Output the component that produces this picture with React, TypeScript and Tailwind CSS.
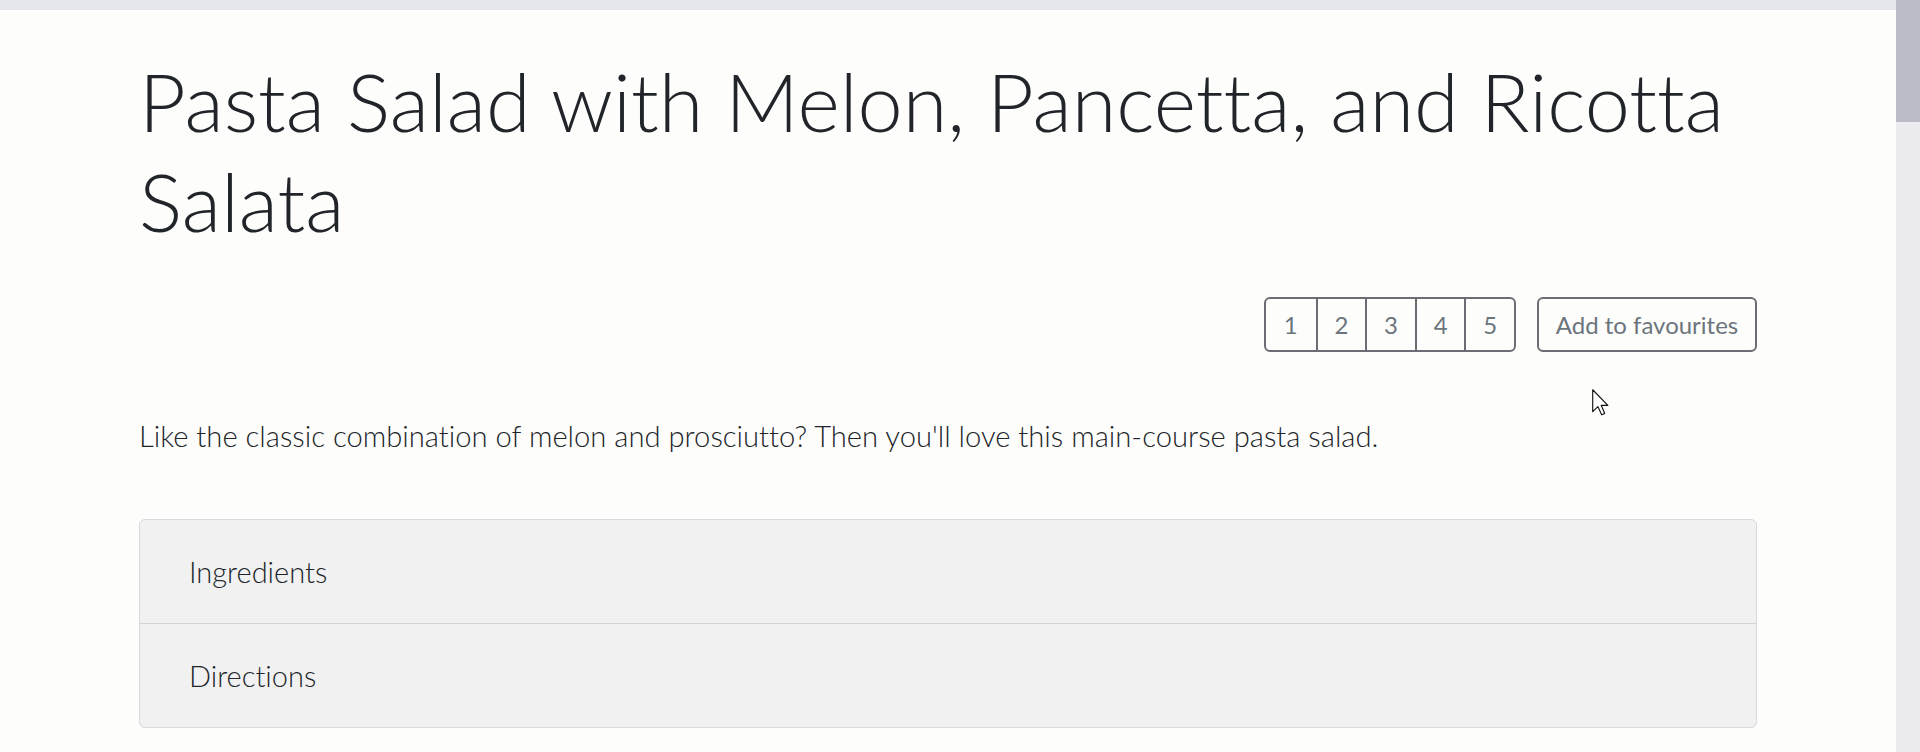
const pages = ["1", "2", "3", "4", "5"];
const sections = ["Ingredients", "Directions"];

function Cursor() {
  return (
    <svg className="absolute left-[1592px] top-[389px]" width="17" height="27" viewBox="0 0 12 19">
      <path d="M0.5 0.5 L0.5 16 L4.2 12.4 L6.8 18.2 L9 17.2 L6.5 11.5 L11.2 11.5 Z" fill="#fff" stroke="#111" strokeWidth="0.8" strokeLinejoin="round" />
    </svg>
  );
}

export default function App() {
  return (
    <div className="relative flex h-[752px] w-full overflow-hidden bg-[#fdfdfc] font-['Lato',sans-serif] text-[#212529] [font-variant-ligatures:none]">
      <div className="flex flex-1 flex-col">
        <div className="h-[10px] bg-[#e6e6ed]" />
        <main className="mx-auto w-[1618px]">
          <h1 className="mt-[41px] text-[81px] font-light leading-[100px]">
            Pasta Salad with Melon, Pancetta, and Ricotta Salata
          </h1>

          <div className="mt-[46px] flex justify-end">
            <div className="grid h-[55px] w-[252px] grid-cols-5 rounded-[6px] border-2 border-[#6c6c74] text-[24px] text-[#6c757d]">
              {pages.map((p, i) => (
                <button
                  key={p}
                  className={i === 0 ? "flex items-center justify-center" : "flex items-center justify-center border-l-2 border-[#6c6c74]"}
                >
                  {p}
                </button>
              ))}
            </div>
            <button className="ml-[21px] flex h-[55px] w-[220px] items-center justify-center rounded-[6px] border-2 border-[#6c6c74] text-[24px] text-[#6c757d]">
              Add to favourites
            </button>
          </div>

          <p className="mt-[62px] text-[29.2px] font-light leading-[44px]">
            Like the classic combination of melon and prosciutto? Then you'll love this main-course pasta salad.
          </p>

          <div className="mt-[61px] overflow-hidden rounded-[6px] border border-[#d8d8dd] bg-[#f1f1f2]">
            {sections.map((s, i) => (
              <div
                key={s}
                className={i === 0 ? "flex h-[104px] items-center border-b-[1.5px] border-[#d2d2d8] px-[49px]" : "flex h-[103px] items-center px-[49px]"}
              >
                <span className="text-[29px] font-light">{s}</span>
              </div>
            ))}
          </div>
        </main>
      </div>

      <div className="w-[24px] bg-[#ebebf0]">
        <div className="h-[122px] bg-[#bcbcc8]" />
      </div>

      <Cursor />
    </div>
  );
}
